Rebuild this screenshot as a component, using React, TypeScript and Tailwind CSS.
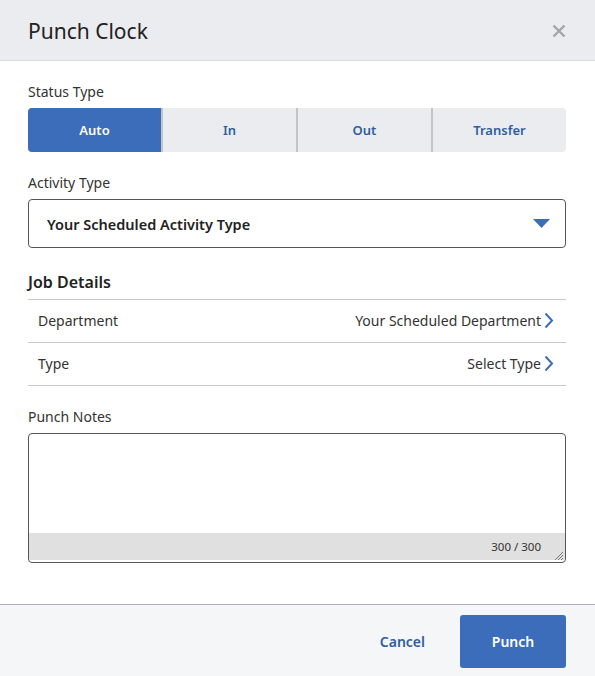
import * as React from 'react';

const font = { fontFamily: '"Noto Sans", "Open Sans", Arial, sans-serif' };

function Chevron(): React.ReactElement {
  return (
    <svg width="10" height="17" viewBox="0 0 10 17" className="ml-[3px] shrink-0">
      <path d="M1.5 1.5 L8 8.5 L1.5 15.5" fill="none" stroke="#3b6dbb" strokeWidth="2" />
    </svg>
  );
}

function DetailRow({ label, value }: { label: string; value: string }): React.ReactElement {
  return (
    <div className="flex h-[43px] items-center justify-between border-b border-[#c6c8cc] pb-[1px] pl-[10px] pr-[12px] text-[14px] text-[#333]">
      <span>{label}</span>
      <span className="flex items-center">
        {value}
        <Chevron />
      </span>
    </div>
  );
}

export default function App(): React.ReactElement {
  const [status, setStatus] = React.useState('Auto');
  const options = ['Auto', 'In', 'Out', 'Transfer'];

  return (
    <div className="flex h-[676px] w-[595px] flex-col bg-white" style={font}>
      {/* header */}
      <div className="flex h-[61px] shrink-0 items-center justify-between border-b border-[#d9dadd] bg-[#ebecf0] pl-[28px] pr-[29px]">
        <h1 className="pt-[4px] text-[21px] text-[#222]">Punch Clock</h1>
        <svg width="14" height="14" viewBox="0 0 14 14" className="mt-[2px]">
          <path d="M1.5 1.5 L12.5 12.5 M12.5 1.5 L1.5 12.5" stroke="#a3a4a7" strokeWidth="2.4" />
        </svg>
      </div>

      {/* body */}
      <div className="flex-1 pl-[28px] pr-[29px] pt-[21px]">
        <div className="text-[14px] leading-[20px] text-[#333]">Status Type</div>
        <div className="mt-[6px] flex h-[44px] overflow-hidden rounded-[4px] bg-[#ebecf0]">
          {options.map((o, i) => (
            <button
              key={o}
              onClick={() => setStatus(o)}
              className={
                'flex flex-1 items-center justify-center pt-[1px] text-[13px] font-semibold ' +
                (i > 0 ? 'border-l-2 border-[#c2c4c8] ' : '') +
                (status === o ? 'bg-[#3b6dbb] text-white' : 'text-[#2f5e9e]')
              }
            >
              {o}
            </button>
          ))}
        </div>

        <div className="mt-[21px] text-[14px] leading-[20px] text-[#333]">Activity Type</div>
        <div className="mt-[6px] flex h-[49px] items-center justify-between rounded-[4px] border border-[#55575b] pl-[18px] pr-[15px]">
          <span className="pt-[2px] text-[14.5px] font-semibold text-[#222]">Your Scheduled Activity Type</span>
          <svg width="17" height="10" viewBox="0 0 17 10">
            <path d="M0 0 L17 0 L8.5 9 Z" fill="#3b6dbb" />
          </svg>
        </div>

        <div className="mt-[23px] pb-[6px] text-[16px] font-semibold leading-[22px] text-[#222]">Job Details</div>
        <div className="border-t border-[#c6c8cc]">
          <DetailRow label="Department" value="Your Scheduled Department" />
          <DetailRow label="Type" value="Select Type" />
        </div>

        <div className="mt-[21px] text-[14px] leading-[20px] text-[#333]">Punch Notes</div>
        <div className="mt-[6px] flex h-[130px] flex-col overflow-hidden rounded-[4px] border border-[#55575b]">
          <textarea className="flex-1 resize-none outline-none" />
          <div className="relative mb-[2px] flex h-[27px] items-center justify-end bg-[#e0e0e0] pr-[24px] text-[11.5px] text-[#333]">
            300 / 300
            <svg width="10" height="10" viewBox="0 0 10 10" className="absolute bottom-[-1px] right-[1px]">
              <path d="M9 1 L1 9 M9 4 L4 9 M9 7 L7 9" stroke="#777" strokeWidth="1" />
            </svg>
          </div>
        </div>
      </div>

      {/* footer */}
      <div className="flex h-[72px] shrink-0 items-start justify-end gap-[35px] border-t border-[#a9b0bb] bg-[#f5f6f8] pr-[29px] pt-[10px]">
        <button className="flex h-[53px] items-center text-[14px] font-semibold text-[#2f5e9e]">Cancel</button>
        <button className="h-[53px] w-[106px] rounded-[3px] bg-[#3b6dbb] text-[14px] font-semibold text-white">
          Punch
        </button>
      </div>
    </div>
  );
}
